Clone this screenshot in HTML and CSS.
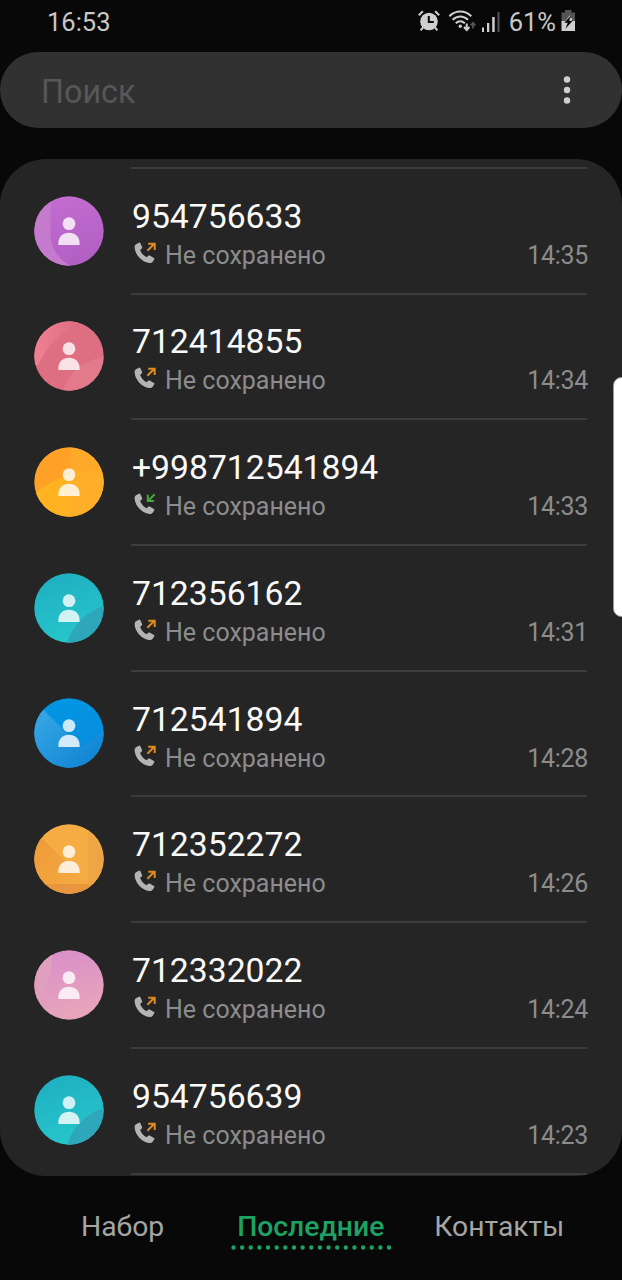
FILE: index.html
```html
<!DOCTYPE html>
<html lang="ru">
<head>
  <meta charset="UTF-8">
  <meta name="viewport" content="width=device-width, initial-scale=1.0">
  <title>Последние</title>
  <link rel="stylesheet" href="styles.css">
</head>
<body>
  <svg class="defs" width="0" height="0">
    <defs>
      <linearGradient id="g-purple" x1="0" y1="0" x2="0.3" y2="1"><stop offset="0" stop-color="#c56ed2"/><stop offset="1" stop-color="#b35fc3"/></linearGradient>
      <linearGradient id="g-teal" x1="0.2" y1="0" x2="0.5" y2="1"><stop offset="0" stop-color="#1fafc1"/><stop offset="1" stop-color="#26c6cb"/></linearGradient>
      <linearGradient id="g-blue" x1="0" y1="0" x2="0.3" y2="1"><stop offset="0" stop-color="#0098e4"/><stop offset="1" stop-color="#0a8bdc"/></linearGradient>
      <linearGradient id="g-sky" x1="0" y1="0" x2="1" y2="1"><stop offset="0" stop-color="#3cace8"/><stop offset="1" stop-color="#0a7fd0"/></linearGradient>
      <linearGradient id="g-rose" x1="0" y1="0" x2="1" y2="0"><stop offset="0" stop-color="#f08094"/><stop offset="1" stop-color="#dd6b80"/></linearGradient>
      <linearGradient id="g-pink" x1="0" y1="0" x2="0.3" y2="1"><stop offset="0" stop-color="#d78ccb"/><stop offset="1" stop-color="#e8a4ba"/></linearGradient>
      <linearGradient id="g-sand" x1="0" y1="0" x2="1" y2="1"><stop offset="0" stop-color="#ee9838"/><stop offset="1" stop-color="#f5ad42"/></linearGradient>
      <clipPath id="round"><circle cx="35" cy="35" r="34.7"/></clipPath>
    </defs>
    <symbol id="person" viewBox="0 0 70 70">
      <circle cx="35" cy="27.7" r="6.4"/>
      <path d="M24.4 49v-2.2c0-6 4.6-10 10.6-10s10.6 4 10.6 10V49z"/>
    </symbol>
    <symbol id="av-purple" viewBox="0 0 70 70">
      <g clip-path="url(#round)">
        <path fill="url(#g-purple)" d="M0 0h70v70H0z"/>
        <path fill="#c57bcd" d="M0 0h16.5v38c0 14 8 25 20 32H0z"/>
      </g>
    </symbol>
    <symbol id="av-rose" viewBox="0 0 70 70">
      <g clip-path="url(#round)">
        <path fill="#de6e81" d="M0 0h70v70H0z"/>
        <path fill="url(#g-rose)" d="M0 0h49C28 9 13 25 4 44H0z"/>
        <path fill="#e27a8b" d="M29 70c5-18 20-31 41-34v34z"/>
      </g>
    </symbol>
    <symbol id="av-amber" viewBox="0 0 70 70">
      <g clip-path="url(#round)">
        <path fill="#ffa126" d="M0 0h70v70H0z"/>
        <path fill="#ffb320" d="M0 47c18-14 40-25 70-24v47H0z"/>
        <path fill="#ffac2d" fill-opacity=".75" d="M36 0h34v70H36z"/>
      </g>
    </symbol>
    <symbol id="av-teal" viewBox="0 0 70 70">
      <g clip-path="url(#round)">
        <path fill="url(#g-teal)" d="M0 0h70v70H0z"/>
        <path fill="#2ea7bb" d="M33 70c5-17 18-31 37-37v37z"/>
      </g>
    </symbol>
    <symbol id="av-blue" viewBox="0 0 70 70">
      <g clip-path="url(#round)">
        <path fill="url(#g-blue)" d="M0 0h70v70H0z"/>
        <path fill="url(#g-sky)" d="M0 3l48 46 22-15v36H0z"/>
      </g>
    </symbol>
    <symbol id="av-sand" viewBox="0 0 70 70">
      <g clip-path="url(#round)">
        <path fill="#f5ac42" d="M0 0h70v70H0z"/>
        <path fill="url(#g-sand)" d="M0 6l54 54v10H0z"/>
        <path fill="#eda546" d="M54 0h16v70H54z"/>
        <path fill="#e8953f" d="M0 60h54l8 10H0z"/>
      </g>
    </symbol>
    <symbol id="av-pink" viewBox="0 0 70 70">
      <g clip-path="url(#round)">
        <path fill="url(#g-pink)" d="M0 0h70v70H0z"/>
        <path fill="#dfa0bd" d="M0 0h18c1 18-3 35-12 49H0z"/>
      </g>
    </symbol>
    <symbol id="phone" viewBox="0 0 24 24">
      <path fill="#b4b4b4" d="M3.400 3 6 1.700c.6-.3 1.200 0 1.400.5l1.700 3.900c.2.600.1 1.100-.4 1.500L7.100 8.900c1.300 3.400 3.400 5.700 6.600 7.400l1.500-1.500c.4-.4 1-.5 1.500-.2l4.200 2.300c.5.300.7.900.4 1.400l-1.600 2.400c-.8 1-2 1.300-3.400 1.200C9 21.300 1.900 13.700 1.600 6.200c0-1.400.7-2.500 1.800-3.200z"/>
    </symbol>
    <symbol id="out" viewBox="0 0 24 24">
      <use href="#phone"/>
      <path fill="none" stroke="#de8a22" stroke-width="2" d="M14.400 9.700l6.900-6.900M15.200 2.700h6.500v6.200"/>
    </symbol>
    <symbol id="in" viewBox="0 0 24 24">
      <use href="#phone"/>
      <path fill="none" stroke="#46a53c" stroke-width="2" d="M21.700 2.200 15.200 8.700M14.800 2.800v6.300h6.200"/>
    </symbol>
  </svg>

  <header class="status">
    <span class="clock">16:53</span>
    <div class="status-icons">
      <svg class="alarm" width="22" height="22" viewBox="0 0 22 22">
        <circle cx="11" cy="11.500" r="8.800" fill="#cfcfcf"/>
        <path d="M.8 5.300 4.900 1.200M21.200 5.300l-4.100-4.100M5 17.500l-2.400 2.800M17 17.500l2.400 2.800" stroke="#cfcfcf" stroke-width="2" fill="none"/>
        <path d="M10.800 6v6h5" stroke="#080808" stroke-width="2" fill="none"/>
      </svg>
      <svg class="wifi" width="27" height="22" viewBox="0 0 27 22">
        <g fill="none" stroke="#cfcfcf" stroke-width="2">
          <path d="M.3 6.200c6.500-6.300 15.500-6.300 22 0"/>
          <path d="M3.600 9.800c4.600-4.500 10.800-4.500 15.400 0"/>
          <path d="M6.800 13.300c2.700-2.600 6.300-2.600 9 0"/>
          <path d="M17.700 13.500v6M15 17l2.700 3 2.700-3"/>
        </g>
        <circle cx="11.300" cy="16.200" r="1.700" fill="#cfcfcf"/>
        <path d="M24 18.500v-5.500M21.700 15.300l2.300-2.500 2.300 2.500" fill="none" stroke="#555" stroke-width="1.800"/>
      </svg>
      <svg class="signal" width="18" height="20" viewBox="0 0 18 20">
        <path fill="#cfcfcf" d="M0 15.500h2V20H0zM5 11h2.300v9H5zM10.200 5h2.500v15h-2.500z"/>
        <path fill="#555" d="M15.500 0h2v20h-2z"/>
      </svg>
      <span class="percent">61%</span>
      <svg class="battery" width="15" height="22" viewBox="0 0 15 22">
        <path fill="#555" d="M4 0h6.500v2.500H14V11H.5V2.500H4z"/>
        <path fill="#cfcfcf" d="M.5 11H14v10H.5z"/>
        <path fill="#cfcfcf" d="M9 5 3 13h3v-2h5V8H9z"/>
        <path fill="#080808" d="M10 5.500 3.300 12.800h3.400L4.500 18.800l7.200-8H8z"/>
      </svg>
    </div>
  </header>

  <div class="search">
    <span class="placeholder">Поиск</span>
    <svg width="8" height="30" viewBox="0 0 8 30" fill="#cfcfcf">
      <circle cx="4" cy="4.500" r="3.200"/><circle cx="4" cy="15" r="3.200"/><circle cx="4" cy="25.500" r="3.200"/>
    </svg>
  </div>

  <main class="calls">
    <div class="call">
      <svg class="avatar"><use href="#av-purple"/><use href="#person"/></svg>
      <div class="info">
        <div class="number">954756633</div>
        <div class="meta"><svg class="dir"><use href="#out"/></svg><span>Не сохранено</span><time>14:35</time></div>
      </div>
    </div>
    <div class="call">
      <svg class="avatar"><use href="#av-rose"/><use href="#person"/></svg>
      <div class="info">
        <div class="number">712414855</div>
        <div class="meta"><svg class="dir"><use href="#out"/></svg><span>Не сохранено</span><time>14:34</time></div>
      </div>
    </div>
    <div class="call">
      <svg class="avatar"><use href="#av-amber"/><use href="#person"/></svg>
      <div class="info">
        <div class="number">+998712541894</div>
        <div class="meta"><svg class="dir"><use href="#in"/></svg><span>Не сохранено</span><time>14:33</time></div>
      </div>
    </div>
    <div class="call">
      <svg class="avatar"><use href="#av-teal"/><use href="#person"/></svg>
      <div class="info">
        <div class="number">712356162</div>
        <div class="meta"><svg class="dir"><use href="#out"/></svg><span>Не сохранено</span><time>14:31</time></div>
      </div>
    </div>
    <div class="call">
      <svg class="avatar"><use href="#av-blue"/><use href="#person"/></svg>
      <div class="info">
        <div class="number">712541894</div>
        <div class="meta"><svg class="dir"><use href="#out"/></svg><span>Не сохранено</span><time>14:28</time></div>
      </div>
    </div>
    <div class="call">
      <svg class="avatar"><use href="#av-sand"/><use href="#person"/></svg>
      <div class="info">
        <div class="number">712352272</div>
        <div class="meta"><svg class="dir"><use href="#out"/></svg><span>Не сохранено</span><time>14:26</time></div>
      </div>
    </div>
    <div class="call">
      <svg class="avatar"><use href="#av-pink"/><use href="#person"/></svg>
      <div class="info">
        <div class="number">712332022</div>
        <div class="meta"><svg class="dir"><use href="#out"/></svg><span>Не сохранено</span><time>14:24</time></div>
      </div>
    </div>
    <div class="call">
      <svg class="avatar"><use href="#av-teal"/><use href="#person"/></svg>
      <div class="info">
        <div class="number">954756639</div>
        <div class="meta"><svg class="dir"><use href="#out"/></svg><span>Не сохранено</span><time>14:23</time></div>
      </div>
    </div>
  </main>

  <nav class="tabs">
    <span class="tab">Набор</span>
    <div class="tab active">
      <span>Последние</span>
      <svg width="160" height="5" viewBox="0 0 160 5"><path d="M2.500 2.500h156" stroke="#1da263" stroke-width="4.400" stroke-linecap="round" stroke-dasharray="0 8.640"/></svg>
    </div>
    <span class="tab">Контакты</span>
  </nav>

  <div class="edge-handle"></div>
</body>
</html>
```
FILE: styles.css
```css
* {
  box-sizing: border-box;
}
body {
  margin: 0;
  width: 622px;
  height: 1280px;
  position: relative;
  overflow: hidden;
  background: #080808;
  color: #fafafa;
  font-family: Roboto, sans-serif;
}
svg {
  display: block;
  flex: none;
}
.defs {
  position: absolute;
}

/* status bar */
.status {
  display: flex;
  justify-content: space-between;
  height: 52px;
  padding: 7px 46px 0 47px;
  font-size: 25.5px;
  line-height: 30px;
  color: #c8c8c8;
}
.status-icons {
  display: flex;
  align-items: flex-start;
}
.alarm {
  margin-top: 3px;
}
.wifi {
  margin: 3px 0 0 9px;
}
.signal {
  margin: 5px 0 0 6px;
}
.percent {
  margin-left: 9px;
}
.battery {
  margin: 3px 0 0 5px;
}

.search {
  display: flex;
  justify-content: space-between;
  align-items: center;
  height: 76px;
  padding: 0 51px 0 41px;
  border-radius: 38px;
  background: #313131;
}
.placeholder {
  font-size: 32.3px;
  line-height: 40px;
  padding-top: 3px;
  color: #575757;
}

/* call list */
.calls {
  height: 1017px;
  margin-top: 31px;
  padding: 8px 35px 0 34px;
  border-radius: 46px;
  background: #252525;
  overflow: hidden;
}
.call {
  display: flex;
  height: 125.7px;
}
.avatar {
  width: 70px;
  height: 70px;
  margin: 28.6px 27px 0 0;
  fill: rgba(255, 255, 255, 0.8);
}
.info {
  flex: 1;
  border-top: 2px solid #3c3c3c;
  padding: 27.8px 0 0 1px;
}
.call:last-child .info {
  border-bottom: 2px solid #3c3c3c;
  margin-bottom: -2px;
}
.number {
  font-size: 33.7px;
  line-height: 40px;
}
.meta {
  display: flex;
  font-size: 25px;
  line-height: 30px;
  padding-top: 4px;
  color: #8c8c8c;
}
.dir {
  width: 24px;
  height: 24px;
  margin: 0 8px 0 1px;
}
.meta time {
  margin-left: auto;
  margin-right: -1px;
  letter-spacing: -0.3px;
}

/* bottom tabs */
.tabs {
  display: flex;
  padding-top: 34px;
  font-size: 28.3px;
  line-height: 34px;
  color: #a5a5a5;
}
.tab:first-child {
  margin-left: 81px;
}
.tab:last-child {
  margin-left: 43px;
}
.active {
  display: flex;
  flex-direction: column;
  align-items: center;
  gap: 1px;
  margin-left: 66px;
  width: 161px;
  color: #1da263;
  font-weight: 500;
}

.edge-handle {
  position: absolute;
  left: 613px;
  top: 377px;
  width: 17px;
  height: 240px;
  border: 1px solid #999;
  border-radius: 9px;
  background: #fff;
}
```
